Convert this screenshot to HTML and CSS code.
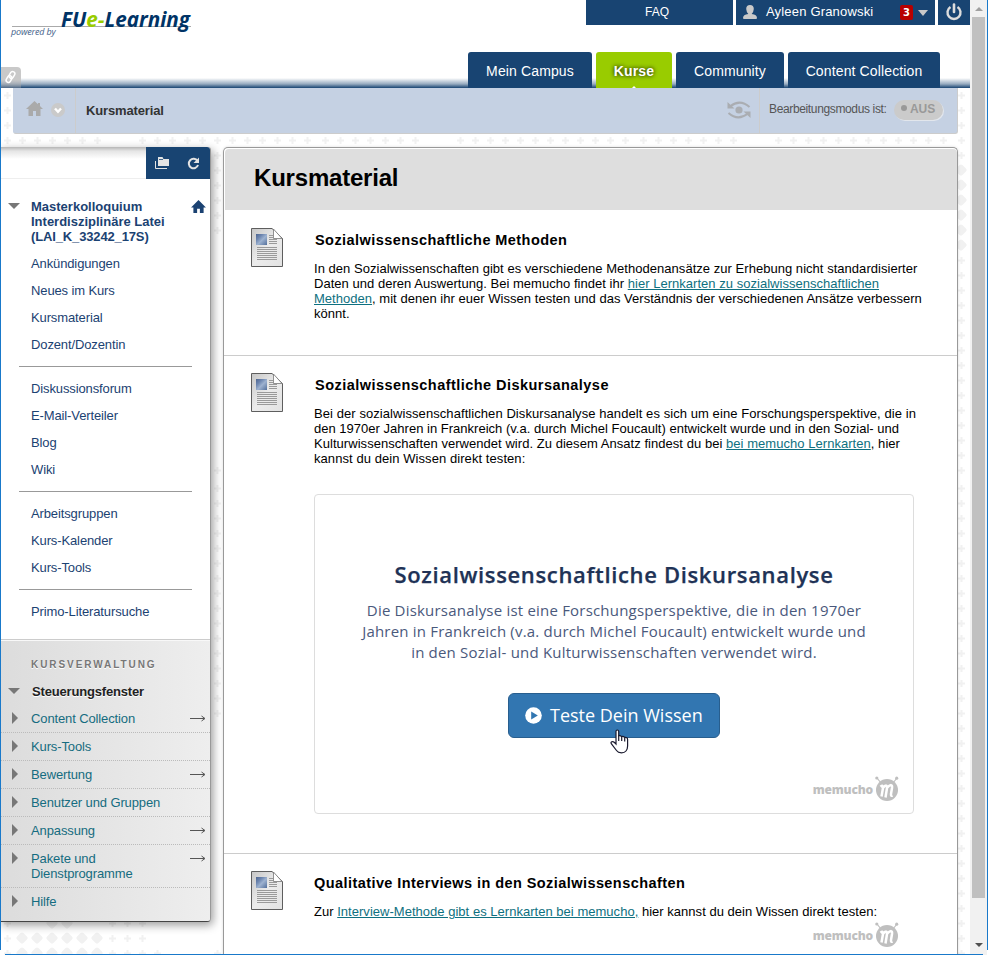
FILE: index.html
```html
<!DOCTYPE html>
<html lang="de">
<head>
<meta charset="utf-8">
<title>Kursmaterial</title>
<link rel="stylesheet" href="styles.css">
</head>
<body>
<svg class="defs" width="0" height="0" aria-hidden="true">
  <defs>
    <linearGradient id="paper" x1="0" y1="0" x2="1" y2="1"><stop offset="0" stop-color="#c6c6c6"/><stop offset=".5" stop-color="#ececec"/><stop offset="1" stop-color="#e2e2e2"/></linearGradient>
    <linearGradient id="photo" x1="0" y1="0" x2="1" y2="1"><stop offset="0" stop-color="#4c6490"/><stop offset=".3" stop-color="#6d86b0"/><stop offset=".55" stop-color="#9db2d0"/><stop offset="1" stop-color="#54709c"/></linearGradient>
    <symbol id="doc" viewBox="0 0 32 39">
      <path d="M.5 .5H21L31.5 10.5V38.5H.5Z" fill="url(#paper)" stroke="#5e5e5e"/>
      <path d="M22.500 1V10.500H31Z" fill="#fff" stroke="#777" stroke-width=".8"/>
      <rect x="5" y="6" width="11" height="11" fill="url(#photo)"/>
      <path d="M18 7.500h4M18 9.500h4M18 11.500h8M18 13.500h8M18 15.500h8M6 19.500h20M6 21.500h20M6 23.500h20M6 25.500h20M6 27.500h20M6 29.500h20M6 31.500h20" stroke="#9a9a9a"/>
    </symbol>
    <symbol id="bot" viewBox="0 0 24 26">
      <path d="M2 2L6 7M22 2L18 7" stroke="#bfbfbf" stroke-width="1.200"/>
      <circle cx="1.800" cy="2" r="1.600" fill="#bfbfbf"/><circle cx="21.700" cy="2.200" r="1.600" fill="#bfbfbf"/>
      <circle cx="12" cy="14" r="11" fill="#bfbfbf"/>
      <path d="M5.500 10.800Q8.300 8.300 8 12L6.500 20.500M8.200 11.500Q12.300 7.500 12 12L10.500 21.500M12.200 11.500Q17.700 6.500 17 12L16 18Q15.800 20.300 17.500 19.500" fill="none" stroke="#fff" stroke-width="2.500"/>
    </symbol>
    <symbol id="house" viewBox="0 0 16 14"><path d="M8 0L16 8H13.500V14H9.500V9.500H6.500V14H2.500V8H0Z" fill="currentColor"/></symbol>
    <symbol id="homesolid" viewBox="0 0 17 15"><path d="M8.500 0L12 3.200V2H14V5L17 8H14.500V15H10V10H7V15H2.500V8H0Z" fill="currentColor"/></symbol>
    <symbol id="arrow" viewBox="0 0 16 7"><path d="M0 3.500H14.500M11.500 1L15 3.500L11.500 6" fill="none" stroke="#555" stroke-width="1"/></symbol>
    <symbol id="dm" viewBox="0 0 12 12"><path d="M6 2.500L9.500 6L6 9.500L2.500 6Z" fill="#f1f1f1" stroke="#f1f1f1" stroke-width="4" stroke-linejoin="round"/></symbol>
    <pattern id="pa" x="0" y="88" width="15" height="15" patternUnits="userSpaceOnUse"><path d="M4 7.500h7M7.500 4v7" stroke="#f1f1f1" stroke-width="2"/></pattern>
    <pattern id="pa2" x="0" y="91" width="15" height="15" patternUnits="userSpaceOnUse"><path d="M4 7.500h7M7.500 4v7" stroke="#f1f1f1" stroke-width="2"/></pattern>
    <pattern id="pb" x="3" y="88" width="15" height="15" patternUnits="userSpaceOnUse"><path d="M4 7.500h7M7.500 4v7" stroke="#f1f1f1" stroke-width="2"/></pattern>
    <pattern id="pc" x="6" y="88" width="15" height="15" patternUnits="userSpaceOnUse"><path d="M4 7.500h7M7.500 4v7" stroke="#f1f1f1" stroke-width="2"/></pattern>
    <pattern id="pd" x="9" y="88" width="15" height="15" patternUnits="userSpaceOnUse"><path d="M4 7.500h7M7.500 4v7" stroke="#f1f1f1" stroke-width="2"/></pattern>
    <pattern id="pd2" x="9" y="91" width="15" height="15" patternUnits="userSpaceOnUse"><path d="M4 7.500h7M7.500 4v7" stroke="#f1f1f1" stroke-width="2"/></pattern>
  </defs>
</svg>
<svg class="backdrop" width="970" height="955" aria-hidden="true">
  <g fill="url(#pa)"><rect y="88" width="105" height="60"/><rect x="135" y="133" width="180" height="15"/><rect x="210" y="148" width="15" height="90"/><rect x="210" y="463" width="15" height="15"/></g>
  <g fill="url(#pa2)"><rect x="210" y="481" width="15" height="240"/><rect y="916" width="15" height="39"/><rect x="105" y="916" width="45" height="39"/><rect x="150" y="946" width="15" height="9"/><rect x="210" y="946" width="15" height="9"/></g>
  <g fill="url(#pb)"><rect x="318" y="133" width="105" height="15"/><rect x="453" y="133" width="180" height="15"/></g>
  <g fill="url(#pc)"><rect x="636" y="133" width="105" height="15"/><rect x="771" y="133" width="180" height="15"/></g>
  <g fill="url(#pd)"><rect x="954" y="88" width="15" height="75"/><rect x="954" y="253" width="15" height="225"/></g>
  <rect x="954" y="481" width="15" height="474" fill="url(#pd2)"/>
  <g><use href="#dm" x="955" y="164" width="12" height="12"/><use href="#dm" x="955" y="179" width="12" height="12"/><use href="#dm" x="955" y="194" width="12" height="12"/><use href="#dm" x="955" y="209" width="12" height="12"/><use href="#dm" x="955" y="224" width="12" height="12"/><use href="#dm" x="955" y="239" width="12" height="12"/></g>
  <g><use href="#dm" x="16" y="932" width="12" height="12"/><use href="#dm" x="31" y="932" width="12" height="12"/><use href="#dm" x="46" y="932" width="12" height="12"/><use href="#dm" x="61" y="932" width="12" height="12"/><use href="#dm" x="76" y="932" width="12" height="12"/><use href="#dm" x="91" y="932" width="12" height="12"/>
  <use href="#dm" x="16" y="947" width="12" height="12"/><use href="#dm" x="31" y="947" width="12" height="12"/><use href="#dm" x="46" y="947" width="12" height="12"/><use href="#dm" x="61" y="947" width="12" height="12"/><use href="#dm" x="76" y="947" width="12" height="12"/><use href="#dm" x="91" y="947" width="12" height="12"/>
  <use href="#dm" x="46" y="917" width="12" height="12"/><use href="#dm" x="61" y="917" width="12" height="12"/></g>
</svg>

<div class="window">
<div class="page">
  <header class="header">
    <div class="brand">
      <div class="logo">FU<span>e-</span>Learning</div>
      <div class="powered">powered by</div>
    </div>
    <div class="link-tab"><svg width="13" height="14" viewBox="0 0 13 14"><g fill="none" stroke="#fff" stroke-width="1.500" transform="rotate(30 6.500 7)"><rect x="4.500" y="1" width="4.500" height="7" rx="2.200"/><rect x="4" y="6" width="4.500" height="7" rx="2.200"/></g></svg></div>
    <div class="topnav">
      <a class="faq">FAQ</a>
      <a class="user"><svg width="16" height="16" viewBox="0 0 16 16"><path d="M8 1Q11.800 1 11.800 5Q11.500 8.500 9.700 10Q15 10.500 15 14Q15 15 14 15H2Q1 15 1 14Q1 10.500 6.300 10Q4.500 8.500 4.200 5Q4.200 1 8 1" fill="#c9c9c9"/></svg><span class="name">Ayleen Granowski</span><b>3</b><i></i></a>
      <a class="power"><svg width="18" height="18" viewBox="0 0 18 18"><path d="M5.500 4A6.500 6.500 0 1 0 12.500 4" fill="none" stroke="#ddd" stroke-width="2.400"/><path d="M9 1.500V9" stroke="#ddd" stroke-width="2.600" stroke-linecap="round"/></svg></a>
    </div>
    <nav class="tabs"><a class="t1">Mein Campus</a><a class="t2">Kurse</a><a class="t3">Community</a><a class="t4">Content Collection</a></nav>
  </header>

  <div class="crumbs">
    <div class="home"><svg width="17" height="15"><use href="#homesolid"/></svg><svg width="14" height="14" viewBox="0 0 14 14"><circle cx="7" cy="7" r="7" fill="#cacaca"/><path d="M4 5.500L7 8.700L10 5.500" fill="none" stroke="#fff" stroke-width="2.400"/></svg></div>
    <div class="here">Kursmaterial</div>
    <svg class="eye" width="24" height="18" viewBox="0 0 24 18"><g fill="none" stroke="#aaadb2" stroke-width="2"><path d="M22.500 6Q13-2.500 3 5.500"/><path d="M1.500 12Q11 20.500 21 12.500"/></g><path d="M.5 1V7.500H7.500ZM23.500 17V10.500H16.500Z" fill="#aaadb2"/><circle cx="12" cy="9" r="3.600" fill="#aaadb2"/></svg>
    <div class="mode"><span>Bearbeitungsmodus ist:</span><b><i></i>AUS</b></div>
  </div>

  <div class="columns">
    <aside class="side">
      <div class="tools"><div class="blank"></div><div class="btns">
        <svg width="15" height="13" viewBox="0 0 15 13"><path d="M3 0H7.500L8.500 2H14V9H3Z" fill="#e4e4e4"/><path d="M4 2.500H8" stroke="#184472" stroke-width=".8"/><path d="M.5 4V11.500H12" fill="none" stroke="#e4e4e4"/></svg>
        <svg width="13" height="13" viewBox="0 0 13 13"><path d="M10.500 4A4.700 4.700 0 1 0 11 8" fill="none" stroke="#e4e4e4" stroke-width="2"/><path d="M12 .5V6H6.500Z" fill="#e4e4e4"/></svg>
      </div></div>
      <div class="course"><i class="down"></i><div class="title"><span>Masterkolloquium</span><br><span>Interdisziplinäre Latei</span><br><span>(LAI_K_33242_17S)</span></div><svg width="15" height="13"><use href="#house"/></svg></div>
      <ul class="menu"><li>Ankündigungen</li><li>Neues im Kurs</li><li>Kursmaterial</li><li>Dozent/Dozentin</li></ul>
      <ul class="menu"><li>Diskussionsforum</li><li>E-Mail-Verteiler</li><li>Blog</li><li>Wiki</li></ul>
      <ul class="menu"><li>Arbeitsgruppen</li><li>Kurs-Kalender</li><li>Kurs-Tools</li></ul>
      <ul class="menu last"><li>Primo-Literatursuche</li></ul>
      <div class="admin">
        <h4>KURSVERWALTUNG</h4>
        <div class="panel"><i class="down"></i><b>Steuerungsfenster</b></div>
        <div class="row"><i></i><a>Content Collection</a><svg width="16" height="7"><use href="#arrow"/></svg></div>
        <div class="row"><i></i><a>Kurs-Tools</a></div>
        <div class="row"><i></i><a>Bewertung</a><svg width="16" height="7"><use href="#arrow"/></svg></div>
        <div class="row"><i></i><a>Benutzer und Gruppen</a></div>
        <div class="row"><i></i><a>Anpassung</a><svg width="16" height="7"><use href="#arrow"/></svg></div>
        <div class="row"><i></i><a>Pakete und<br>Dienstprogramme</a><svg width="16" height="7"><use href="#arrow"/></svg></div>
        <div class="row"><i></i><a>Hilfe</a></div>
      </div>
    </aside>

    <main class="content">
      <h1>Kursmaterial</h1>
      <section class="item first">
        <svg class="doc" width="32" height="39"><use href="#doc"/></svg>
        <div class="text">
          <h3>Sozialwissenschaftliche Methoden</h3>
          <p><span class="l1">In den Sozialwissenschaften gibt es verschiedene Methodenansätze zur Erhebung nicht standardisierter</span><br><span class="l2">Daten und deren Auswertung. Bei memucho findet ihr <a>hier Lernkarten zu sozialwissenschaftlichen</a></span><br><span class="l3"><a>Methoden</a>, mit denen ihr euer Wissen testen und das Verständnis der verschiedenen Ansätze verbessern</span><br>könnt.</p>
        </div>
      </section>
      <section class="item second">
        <svg class="doc" width="32" height="39"><use href="#doc"/></svg>
        <div class="text">
          <h3>Sozialwissenschaftliche Diskursanalyse</h3>
          <p><span class="l4">Bei der sozialwissenschaftlichen Diskursanalyse handelt es sich um eine Forschungsperspektive, die in</span><br><span class="l5">den 1970er Jahren in Frankreich (v.a. durch Michel Foucault) entwickelt wurde und in den Sozial- und</span><br><span class="l6">Kulturwissenschaften verwendet wird. Zu diesem Ansatz findest du bei <a>bei memucho Lernkarten</a>, hier</span><br><span class="l7">kannst du dein Wissen direkt testen:</span></p>
          <div class="card">
            <h2>Sozialwissenschaftliche Diskursanalyse</h2>
            <p>Die Diskursanalyse ist eine Forschungsperspektive, die in den 1970er<br>Jahren in Frankreich (v.a. durch Michel Foucault) entwickelt wurde und<br>in den Sozial- und Kulturwissenschaften verwendet wird.</p>
            <div class="cta"><svg width="17" height="17" viewBox="0 0 17 17"><circle cx="8.500" cy="8.500" r="8.300" fill="#fff"/><path d="M6.200 4.500V12.500L12.800 8.500Z" fill="#3276b1"/></svg>Teste Dein Wissen
              <svg class="hand" width="19" height="25" viewBox="0 0 19 25"><path d="M6 13V2.500Q6 1 7.300 1Q8.700 1 8.700 2.500V6.800Q10.200 6.300 11.700 7.600Q13.300 7 14.700 8.400Q17.600 8.200 17.600 10.500V17Q17.600 20 16 22Q14.500 23.800 11.500 23.800Q8 23.800 6.500 21.500L1.300 14.700Q.5 13.300 1.800 12.700Q3 12.200 4.200 13.300L6 15Z" fill="#fff" stroke="#1a1a2e" stroke-width="1.200"/><path d="M8.700 6.500V12M11.700 7.500V12M14.700 8.500V12.500" stroke="#1a1a2e" stroke-width="1.200"/></svg>
            </div>
            <div class="memucho"><span>memucho</span><svg width="24" height="26"><use href="#bot"/></svg></div>
          </div>
        </div>
      </section>
      <section class="item third">
        <svg class="doc" width="32" height="39"><use href="#doc"/></svg>
        <div class="text">
          <h3>Qualitative Interviews in den Sozialwissenschaften</h3>
          <p><span class="l8">Zur <a>Interview-Methode gibt es Lernkarten bei memucho,</a> hier kannst du dein Wissen direkt testen:</span></p>
          <div class="memucho"><span>memucho</span><svg width="24" height="26"><use href="#bot"/></svg></div>
        </div>
      </section>
    </main>
  </div>
</div>
<div class="scroll"><i class="up"></i><div class="thumb"></div><i class="dn"></i></div>
</div>
<div class="edge left"></div><div class="edge right"></div><div class="edge bottom"></div>
</body>
</html>
```
FILE: styles.css
```css
* { box-sizing: border-box; }
body { margin: 0; width: 988px; height: 955px; overflow: hidden; position: relative; background: #fff; font: 13px/15px "Liberation Sans", Arial, sans-serif; color: #000; }
ul, h1, h2, h3, h4, p { margin: 0; padding: 0; list-style: none; }
svg { display: block; flex: none; }
i { display: block; flex: none; }
.defs, .backdrop { position: absolute; left: 0; top: 0; }
.window { position: relative; display: flex; height: 955px; overflow: hidden; }
.page { width: 970px; height: 955px; overflow: hidden; }

.edge { position: absolute; background: #1979ca; }
.edge.left { left: 0; top: 0; width: 1px; height: 950px; }
.edge.right { right: 0; top: 0; width: 1px; height: 950px; }
.edge.bottom { left: 5px; right: 5px; bottom: 0; height: 1px; }

.scroll { width: 17px; background: #f1f1f1; display: flex; flex-direction: column; align-items: center; }
.up { margin-top: 7px; border: 4px solid transparent; border-top: 0; border-bottom: 4px solid #a0a0a0; }
.thumb { margin-top: 6px; width: 13px; height: 881px; background: #c0c0c0; }
.dn { margin-top: 45px; border: 4px solid transparent; border-bottom: 0; border-top: 4px solid #505050; }

.header { position: relative; height: 88px; background: linear-gradient(rgba(24,68,114,0), rgba(24,68,114,.45) 60%, #184472) 0 100% / 100% 10px no-repeat #fff; }
.brand { position: absolute; left: 12px; top: 7px; width: 179px; height: 20px; border-bottom: 1px solid #aaa; }
.logo { margin-left: 49px; font: italic bold 22px/22px "Open Sans", sans-serif; color: #003366; white-space: nowrap; transform: scaleX(.94); transform-origin: 0 0; }
.logo span { color: #9c0; }
.powered { margin: -3px 0 0 -1px; font: italic 9px/11px "Open Sans", sans-serif; letter-spacing: -.15px; color: #44628a; white-space: nowrap; }
.link-tab { position: absolute; left: 0; top: 67px; width: 21px; height: 21px; padding: 3px 0 0 4px; border-radius: 0 4px 0 0; background: linear-gradient(#c9c9c9 60%, rgba(110,125,145,.6)); }
.topnav { display: flex; gap: 3px; justify-content: flex-end; height: 25px; font-size: 13px; line-height: 24px; color: #fff; }
.topnav a { background: #184472; display: flex; }
.faq { width: 147px; padding-right: 5px; justify-content: center; font-size: 12px; }
.user { width: 199px; align-items: center; padding-left: 6px; }
.name { width: 134px; margin-left: 8px; letter-spacing: .18px; line-height: 22px; margin-top: -2px; }
.user svg { margin-top: -1px; }
.user b { width: 13px; height: 15px; background: #b80000; border-radius: 2px; text-align: center; font: 800 10px/15px "DejaVu Sans", sans-serif; }
.user i { margin-left: 5px; border: 5px solid transparent; border-bottom: 0; border-top: 6px solid #c9c9c9; }
.power { width: 32px; padding: 3px 0 0 7px; }
.tabs { display: flex; gap: 4px; justify-content: flex-end; margin: 27px 30px 0 0; font-size: 14px; line-height: 38px; color: #fff; text-align: center; letter-spacing: .13px; }
.tabs a { height: 36px; background: #184472; border-radius: 3px 3px 0 0; }
.t1 { width: 124px; } .t3 { width: 108px; } .t4 { width: 152px; }
.tabs .t2 { width: 76px; background: #9c0; font-weight: bold; text-shadow: 0 0 4px #000; position: relative; }
.t2::after { content: ""; position: absolute; left: 36px; bottom: 0; border: 2px solid transparent; border-top: 0; border-bottom: 2px solid #fff; }

.crumbs { margin: 0 12px 0 13px; height: 46px; background: #c5d1e3; border: 1px solid #ccc; border-top: 0; border-left-color: #c5d1e3; border-radius: 0 0 3px 3px; display: flex; }
.home { width: 62px; height: 45px; border-right: 1px solid #ccc; display: flex; padding: 13px 0 0 12px; gap: 8px; color: #aaa; }
.home svg + svg { margin-top: 2px; }
.here { padding: 15px 0 0 10px; font-weight: bold; color: #333; letter-spacing: -.14px; flex: 1; }
.eye { margin: 13px 8px 0 0; }
.mode { width: 198px; border-left: 1px solid #ccc; padding: 12px 0 0 9px; display: flex; color: #555; font-size: 12px; line-height: 18px; letter-spacing: -.36px; }
.mode span { width: 125px; white-space: nowrap; }
.mode b { width: 49px; height: 20px; background: #cbcbcb; border-radius: 10px; box-shadow: 1px 1px 0 #e2e6ec; color: #999; display: flex; line-height: 19px; letter-spacing: -.1px; }
.mode b i { width: 6px; height: 6px; border-radius: 3px; background: #999; margin: 5px 3px 0 7px; }

.columns { display: flex; gap: 12px; margin-top: 13px; align-items: flex-start; }
.side { width: 211px; height: 775px; background: #fff; border-right: 1px solid #999; border-bottom: 1px solid #444; border-radius: 0 3px 4px 0; box-shadow: 2px 3px 10px rgba(0,0,0,.4); letter-spacing: -.12px; color: #1b4272; overflow: visible; }
.tools { display: flex; height: 32px; }
.blank { width: 146px; background: linear-gradient(#b5b5b5, #e5e5e5 4px, #fff 12px); border-bottom: 1px solid #eee; }
.btns { flex: 1; background: #184472; display: flex; border-top-right-radius: 3px; padding: 10px 10px 0 9px; justify-content: space-between; }
.course { display: flex; margin-top: 20px; height: 51px; padding-left: 8px; font-weight: bold; }
.down { width: 12px; border: 6px solid transparent; border-bottom: 0; border-top: 6px solid #777; align-self: flex-start; margin-top: 4px; }
.title { width: 160px; margin-left: 11px; letter-spacing: 0; }
.title span:nth-of-type(3) { letter-spacing: -.14px; }
.course svg { margin-top: 1px; }
.menu { margin: 0 18px 0 19px; padding: 0 0 8px 12px; border-bottom: 1px solid #999; line-height: 27px; }
.menu + .menu { padding-top: 8px; }
.menu li { height: 27px; }
.menu.last { border: 0; height: 49px; }
.admin { height: 282px; border-top: 1px solid #ccc; box-shadow: inset 0 1px #f8f8f8; background: linear-gradient(90deg, #dcdcdc, #eee); border-bottom-right-radius: 3px; }
.admin h4 { font-size: 10px; line-height: 12px; letter-spacing: 1.93px; color: #777; padding: 19px 0 0 31px; height: 44px; text-shadow: 0 1px #fff; }
.panel { display: flex; padding-left: 8px; height: 21px; color: #222; text-shadow: 0 1px #fff; }
.panel b { margin-left: 12px; letter-spacing: -.17px; }
.panel .down { margin-top: 4px; }
.row { display: flex; padding: 6px 4px 6px 12px; border-bottom: 1px dotted #bbb; min-height: 28px; align-items: flex-start; color: #156c80; }
.row:last-child { border: 0; }
.row i { border: 6px solid transparent; border-right: 0; border-left: 6px solid #777; margin: 1px 13px 0 0; }
.row a { flex: 1; }
.row svg { margin-top: 4px; }

.content { width: 735px; height: 820px; background: #fff; border: 1px solid #999; border-bottom: 0; border-radius: 5px 5px 0 0; padding: 1px 0 0; box-shadow: 0 0 3px rgba(0,0,0,.15); }
.content h1 { height: 61px; margin-left: 1px; background: #dedede; border-radius: 4px 4px 0 0; font-size: 24px; line-height: 57px; padding-left: 29px; letter-spacing: -.2px; }
.item { display: flex; padding: 18px 0 0 27px; border-bottom: 1px solid #ccc; }
.text { margin-left: 31px; width: 600px; white-space: nowrap; letter-spacing: .03px; }
.item h3 { font-size: 14.5px; line-height: 18px; letter-spacing: .43px; margin-top: 3px; height: 30px; }
.first h3, .second h3 { padding-left: 1px; letter-spacing: .46px; }
.first h3 { letter-spacing: .43px; }
.item a { color: #0e7080; text-decoration: underline; }
.first { height: 146px; }
.second { height: 498px; padding-top: 17px; }
.third { border: 0; padding-top: 17px; }
.l1 { letter-spacing: .035px; } .l2 { letter-spacing: .03px; } .l3 { letter-spacing: .03px; }
.l4 { letter-spacing: .072px; } .l5 { letter-spacing: .014px; } .l6 { letter-spacing: .044px; } .l7 { letter-spacing: .07px; } .l8 { letter-spacing: .024px; }

.card { position: relative; width: 600px; height: 320px; margin-top: 28px; border: 1px solid #ddd; border-radius: 4px; font-family: "Open Sans", sans-serif; text-align: center; color: #203256; letter-spacing: 0; }
.card h2 { margin-top: 65px; font-size: 22px; font-weight: 600; line-height: 28px; letter-spacing: .65px; -webkit-text-stroke: .25px #203256; }
.card p { margin-top: 12px; font-size: 15px; font-weight: 400; line-height: 21px; letter-spacing: .2px; color: #4a597c; }
.cta { position: relative; width: 212px; height: 45px; margin: 30px auto 0 193px; background: #3276b1; border: 1px solid #285e8e; border-radius: 6px; color: #fff; font-size: 18px; line-height: 43px; display: flex; align-items: center; padding-left: 16px; gap: 8px; }
.hand { position: absolute; left: 101px; top: 35px; }
.memucho { display: flex; justify-content: flex-end; align-items: flex-end; gap: 2px; padding-right: 14px; margin-top: 38px; color: #bfbfbf; }
.memucho span { font: 800 12px/24px "Open Sans", sans-serif; letter-spacing: -.2px; }
.third .memucho { margin-top: 3px; padding-right: 15px; }
```
